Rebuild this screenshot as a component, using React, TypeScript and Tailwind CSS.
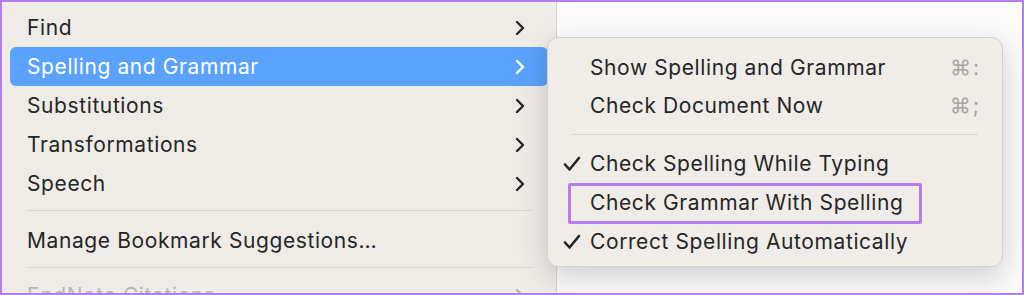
import React from "react";

const font = { fontFamily: "Inter, 'Liberation Sans', sans-serif" };

function Chevron({ color = "#262626" }: { color?: string }) {
  return (
    <svg width="10" height="16" viewBox="0 0 10 16" fill="none">
      <path d="M2 2l6 6-6 6" stroke={color} strokeWidth="2.4" strokeLinecap="round" strokeLinejoin="round" />
    </svg>
  );
}

function Check() {
  return (
    <svg width="18" height="16" viewBox="0 0 18 16" fill="none">
      <path d="M2 8.5l4.5 5L16 2" stroke="#262626" strokeWidth="2.6" strokeLinecap="round" strokeLinejoin="round" />
    </svg>
  );
}

const mainItems = ["Find", "Spelling and Grammar", "Substitutions", "Transformations", "Speech"];

const subTop = [
  { label: "Show Spelling and Grammar", key: ":" },
  { label: "Check Document Now", key: ";" },
];

export default function App() {
  return (
    <div
      className="relative w-[1024px] h-[295px] overflow-hidden border-2 border-[#b67cf1] bg-[#fbfbfb] text-[#262626]"
      style={font}
    >
      <div className="flex h-full">
        {/* Main menu */}
        <div className="w-[555px] h-full bg-[#efece8] border-r border-[#d6d3cf] pt-[6px] pl-[8px] pr-[8px] text-[21px] tracking-[0.6px]">
          {mainItems.map((item) => {
            const active = item === "Spelling and Grammar";
            return (
              <div
                key={item}
                className={`flex items-center justify-between h-[39px] pl-[17px] pr-[23px] rounded-[6px] ${
                  active ? "bg-[#5aa2fd] text-white" : ""
                }`}
              >
                <span>{item}</span>
                <Chevron color={active ? "#ffffff" : "#262626"} />
              </div>
            );
          })}
          <div className="ml-[17px] mr-[16px] mt-[7px] mb-[10px] h-px bg-[#d8d5d1]" />
          <div className="flex items-center h-[39px] pl-[17px]">Manage Bookmark Suggestions…</div>
          <div className="ml-[17px] mr-[16px] mt-[7px] mb-[8px] h-px bg-[#d8d5d1]" />
          <div className="flex items-center justify-between h-[39px] pl-[17px] pr-[23px] text-[#b9b6b2]">
            <span>EndNote Citations</span>
            <Chevron color="#b9b6b2" />
          </div>
        </div>
        <div className="flex-1" />
      </div>

      {/* Submenu */}
      <div className="absolute left-[545px] top-[35px] w-[456px] h-[230px] rounded-[11px] bg-[#f0ece8] border border-[#d4d1cd] shadow-[0_10px_30px_rgba(0,0,0,0.18)] pt-[11px] pb-[8px] text-[21px] tracking-[0.6px]">
        {subTop.map((it) => (
          <div key={it.label} className="flex items-center justify-between h-[38px] pl-[42px] pr-[21px]">
            <span>{it.label}</span>
            <span className="text-[#a9a6a2] tracking-[2px]">⌘{it.key}</span>
          </div>
        ))}
        <div className="mx-[24px] my-[9px] h-px bg-[#d8d5d1]" />
        <div className="flex items-center h-[39px] pl-[15px]">
          <span className="w-[27px]"><Check /></span>
          <span>Check Spelling While Typing</span>
        </div>
        <div className="relative flex items-center h-[39px] pl-[42px]">
          <span>Check Grammar With Spelling</span>
          <div className="absolute left-[20px] top-0 w-[354px] h-[41px] border-[3px] border-[#b67cf1] rounded-[2px]" />
        </div>
        <div className="flex items-center h-[39px] pl-[15px]">
          <span className="w-[27px]"><Check /></span>
          <span>Correct Spelling Automatically</span>
        </div>
      </div>
    </div>
  );
}
